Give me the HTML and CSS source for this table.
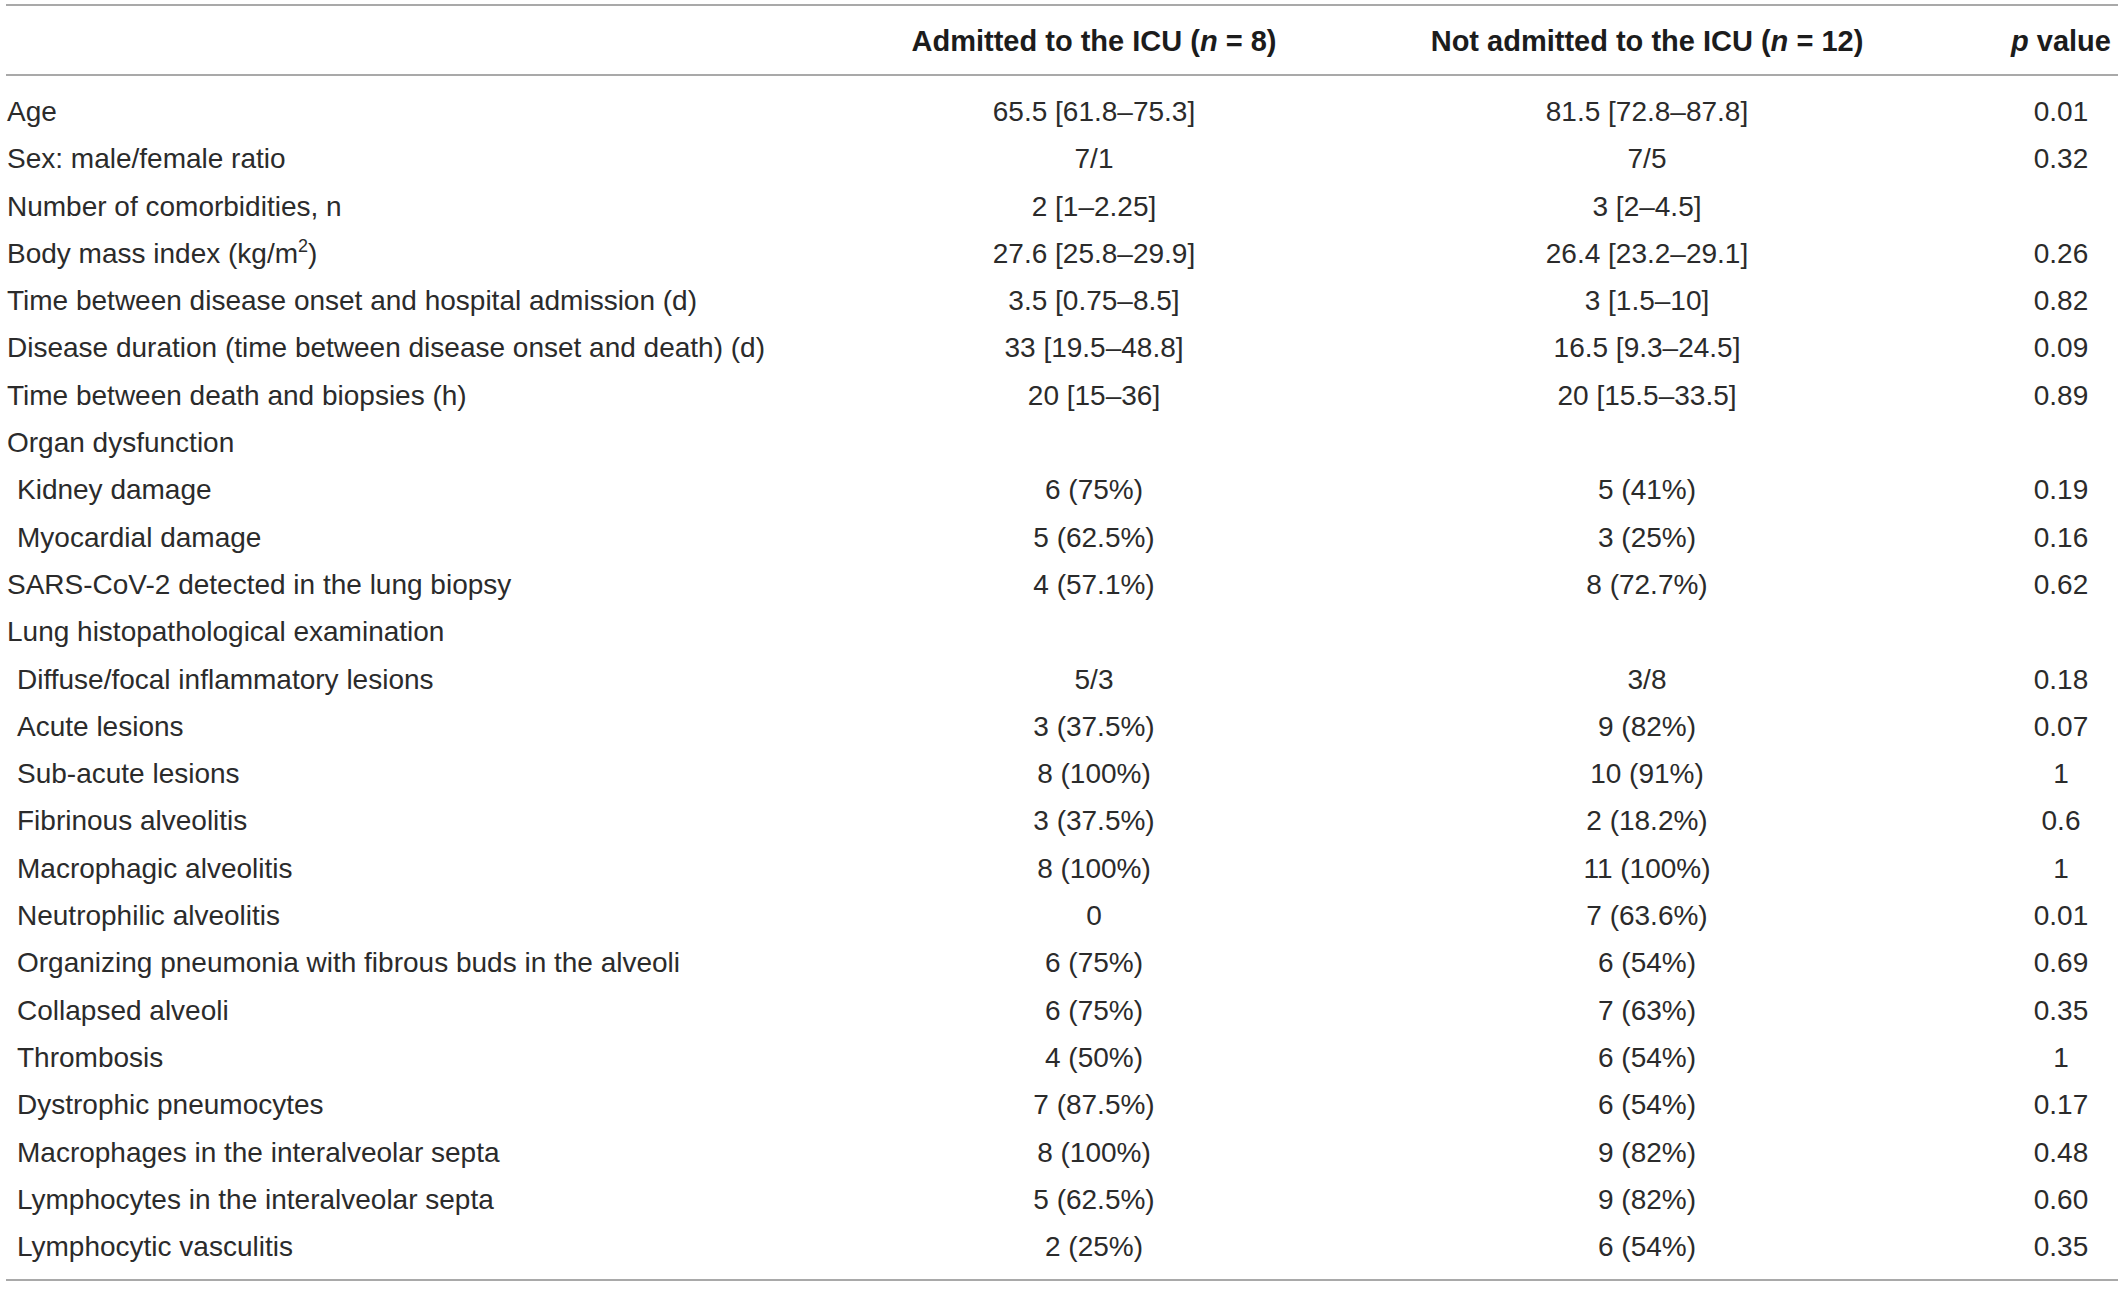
FILE: index.html
```html
<!DOCTYPE html>
<html lang="en">
<head>
  <meta charset="UTF-8">
  <title>Patient characteristics</title>
  <link rel="stylesheet" href="styles.css">
</head>
<body>
  <table class="data-table">
    <colgroup>
      <col class="col-label">
      <col class="col-icu">
      <col class="col-noicu">
      <col class="col-p">
    </colgroup>
    <thead>
      <tr>
        <th></th>
        <th>Admitted to the ICU (<i>n</i> = 8)</th>
        <th>Not admitted to the ICU (<i>n</i> = 12)</th>
        <th><i>p</i> value</th>
      </tr>
    </thead>
    <tbody>
      <tr><td>Age</td><td>65.5 [61.8–75.3]</td><td>81.5 [72.8–87.8]</td><td>0.01</td></tr>
      <tr><td>Sex: male/female ratio</td><td>7/1</td><td>7/5</td><td>0.32</td></tr>
      <tr><td>Number of comorbidities, n</td><td>2 [1–2.25]</td><td>3 [2–4.5]</td><td></td></tr>
      <tr><td>Body mass index (kg/m<sup>2</sup>)</td><td>27.6 [25.8–29.9]</td><td>26.4 [23.2–29.1]</td><td>0.26</td></tr>
      <tr><td>Time between disease onset and hospital admission (d)</td><td>3.5 [0.75–8.5]</td><td>3 [1.5–10]</td><td>0.82</td></tr>
      <tr><td>Disease duration (time between disease onset and death) (d)</td><td>33 [19.5–48.8]</td><td>16.5 [9.3–24.5]</td><td>0.09</td></tr>
      <tr><td>Time between death and biopsies (h)</td><td>20 [15–36]</td><td>20 [15.5–33.5]</td><td>0.89</td></tr>
      <tr><td>Organ dysfunction</td><td></td><td></td><td></td></tr>
      <tr><td class="sub">Kidney damage</td><td>6 (75%)</td><td>5 (41%)</td><td>0.19</td></tr>
      <tr><td class="sub">Myocardial damage</td><td>5 (62.5%)</td><td>3 (25%)</td><td>0.16</td></tr>
      <tr><td>SARS-CoV-2 detected in the lung biopsy</td><td>4 (57.1%)</td><td>8 (72.7%)</td><td>0.62</td></tr>
      <tr><td>Lung histopathological examination</td><td></td><td></td><td></td></tr>
      <tr><td class="sub">Diffuse/focal inflammatory lesions</td><td>5/3</td><td>3/8</td><td>0.18</td></tr>
      <tr><td class="sub">Acute lesions</td><td>3 (37.5%)</td><td>9 (82%)</td><td>0.07</td></tr>
      <tr><td class="sub">Sub-acute lesions</td><td>8 (100%)</td><td>10 (91%)</td><td>1</td></tr>
      <tr><td class="sub">Fibrinous alveolitis</td><td>3 (37.5%)</td><td>2 (18.2%)</td><td>0.6</td></tr>
      <tr><td class="sub">Macrophagic alveolitis</td><td>8 (100%)</td><td>11 (100%)</td><td>1</td></tr>
      <tr><td class="sub">Neutrophilic alveolitis</td><td>0</td><td>7 (63.6%)</td><td>0.01</td></tr>
      <tr><td class="sub">Organizing pneumonia with fibrous buds in the alveoli</td><td>6 (75%)</td><td>6 (54%)</td><td>0.69</td></tr>
      <tr><td class="sub">Collapsed alveoli</td><td>6 (75%)</td><td>7 (63%)</td><td>0.35</td></tr>
      <tr><td class="sub">Thrombosis</td><td>4 (50%)</td><td>6 (54%)</td><td>1</td></tr>
      <tr><td class="sub">Dystrophic pneumocytes</td><td>7 (87.5%)</td><td>6 (54%)</td><td>0.17</td></tr>
      <tr><td class="sub">Macrophages in the interalveolar septa</td><td>8 (100%)</td><td>9 (82%)</td><td>0.48</td></tr>
      <tr><td class="sub">Lymphocytes in the interalveolar septa</td><td>5 (62.5%)</td><td>9 (82%)</td><td>0.60</td></tr>
      <tr><td class="sub">Lymphocytic vasculitis</td><td>2 (25%)</td><td>6 (54%)</td><td>0.35</td></tr>
    </tbody>
  </table>
</body>
</html>
```

FILE: styles.css
```css
/* Reset */
* {
  margin: 0;
  padding: 0;
  box-sizing: border-box;
}

body {
  background-color: #fff;
  color: #2b2b2b;
  font-family: "Liberation Sans", Arial, Helvetica, sans-serif;
  padding: 4px 0 0 6px;
}

/* Table */
.data-table {
  width: 2112px;
  table-layout: fixed;
  border-collapse: collapse;
  border-top: 2px solid #a9a9a9;
  border-bottom: 2px solid #a9a9a9;
  font-size: 28px;
}

.col-label { width: 892px; }
.col-icu { width: 392px; }
.col-noicu { width: 714px; }
.col-p { width: 114px; }

/* Header */
.data-table thead th {
  height: 70px;
  padding-top: 2px;
  font-size: 29px;
  font-weight: bold;
  color: #1c1c1c;
  text-align: center;
  vertical-align: middle;
  border-bottom: 2px solid #a9a9a9;
  white-space: nowrap;
}

/* Body rows */
.data-table tbody td {
  height: 47.3px;
  line-height: 47.3px;
  text-align: center;
  vertical-align: middle;
  white-space: nowrap;
}

.data-table tbody td:first-child {
  text-align: left;
  padding-left: 1px;
}

.data-table tbody td.sub {
  padding-left: 11px;
}

.data-table tbody tr:first-child td {
  height: 59.3px;
  padding-top: 12px;
}

.data-table tbody tr:last-child td {
  height: 56.3px;
  padding-bottom: 9px;
}

sup {
  font-size: 18px;
  line-height: 0;
  vertical-align: 11px;
}
```
